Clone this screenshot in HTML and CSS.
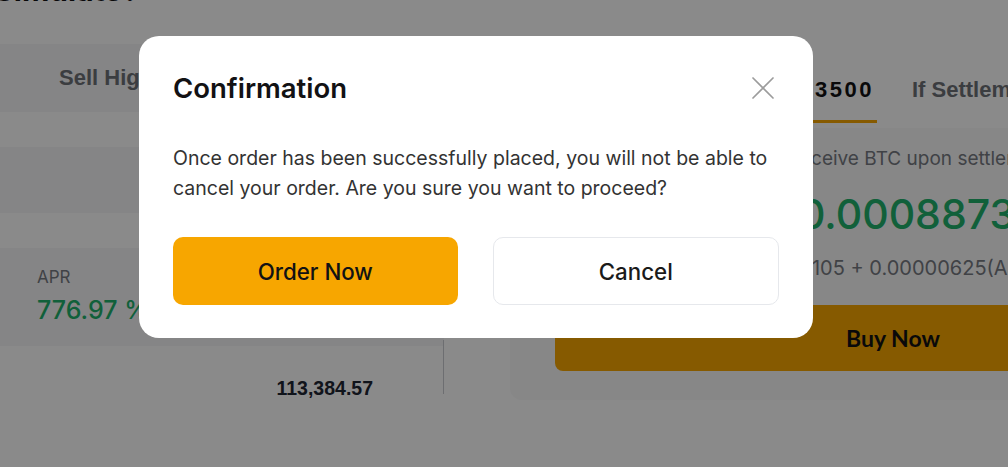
FILE: index.html
```html
<!DOCTYPE html>
<html lang="en">
<head>
<meta charset="utf-8">
<title>Confirmation</title>
<link rel="stylesheet" href="styles.css">
</head>
<body>
<div class="page">
  <h1 class="page-title">How to Simulate?</h1>
  <div class="content">
    <section class="left">
      <div class="band tabs-left"><span class="tab-left">Sell High</span></div>
      <div class="spacer"></div>
      <div class="band band-row"></div>
      <div class="spacer"></div>
      <div class="band apr-card">
        <div class="apr-label">APR</div>
        <div class="apr-value">776.97 %</div>
      </div>
      <div class="price-row"><span class="price">113,384.57</span></div>
    </section>
    <section class="right">
      <div class="tabs-right">
        <span class="tab tab-active">If Settlement Price ≤ 113500</span>
        <span class="tab">If Settlement Price &gt; 113500</span>
      </div>
      <div class="result-card">
        <p class="line receive">You will receive BTC upon settlement</p>
        <p class="line amount">0.00088730 BTC</p>
        <p class="line breakdown">0.00088105 + 0.00000625(APR Interest)</p>
        <button class="buy" type="button">Buy Now</button>
      </div>
    </section>
  </div>
</div>

<div class="backdrop"></div>

<div class="modal" role="dialog" aria-labelledby="modal-title">
  <div class="modal-header">
    <h2 class="modal-title" id="modal-title">Confirmation</h2>
    <button class="close" type="button" aria-label="Close">
      <svg width="24" height="24" viewBox="0 0 24 24" fill="none" stroke="currentColor" stroke-width="1.7" stroke-linecap="round">
        <path d="M2 2 L22 22 M22 2 L2 22"/>
      </svg>
    </button>
  </div>
  <p class="modal-text">Once order has been successfully placed, you will not be able to cancel your order. Are you sure you want to proceed?</p>
  <div class="modal-actions">
    <button class="btn btn-primary" type="button">Order Now</button>
    <button class="btn btn-secondary" type="button">Cancel</button>
  </div>
</div>
</body>
</html>
```

FILE: styles.css
```css
* { box-sizing: border-box; }

html, body {
  margin: 0;
  padding: 0;
}

body {
  width: 1008px;
  height: 467px;
  overflow: hidden;
  background: #ffffff;
  font-family: Inter, "Noto Sans", Arial, sans-serif;
  color: #121214;
}

.page {
  width: 1008px;
  height: 467px;
  overflow: hidden;
}

.page-title {
  margin: -28px 0 36px -115px;
  height: 36px;
  font-size: 30px;
  line-height: 36px;
  font-weight: 700;
  white-space: nowrap;
}

.content {
  display: flex;
}

.left {
  width: 444px;
  flex: none;
  display: flex;
  flex-direction: column;
}

.band {
  background: #f6f6f7;
}

.tabs-left {
  height: 68px;
  display: flex;
  align-items: center;
  padding-left: 59px;
}

.tab-left {
  font-family: "Liberation Sans", Arial, sans-serif;
  font-size: 22px;
  font-weight: 700;
  color: #6e7177;
}

.spacer { height: 35px; }

.band-row { height: 66px; }

.apr-card {
  height: 98px;
  padding: 19px 0 0 37px;
}

.apr-label {
  font-size: 17px;
  line-height: 20px;
  color: #777b82;
}

.apr-value {
  margin-top: 8px;
  font-size: 25px;
  line-height: 30px;
  font-weight: 500;
  color: #20b26c;
}

.price-row {
  height: 54px;
  margin-top: -6px;
  padding: 38px 70px 0 0;
  border-right: 1px solid #c9ccd1;
  text-align: right;
}

.price {
  font-family: "Liberation Sans", Arial, sans-serif;
  font-size: 19.5px;
  line-height: 20px;
  font-weight: 700;
  color: #1e2533;
}

.right {
  flex: none;
  width: 900px;
  display: flex;
  flex-direction: column;
}

.tabs-right {
  margin-top: 12px;
  display: flex;
  gap: 30px;
}

.tab {
  padding: 19px 5px 15px;
  font-family: "Liberation Sans", Arial, sans-serif;
  font-size: 22px;
  line-height: 30px;
  font-weight: 700;
  color: #6e7177;
  white-space: nowrap;
  border-bottom: 3px solid transparent;
}

.tab-active {
  width: 433px;
  padding-right: 3px;
  text-align: right;
  letter-spacing: 2.5px;
  color: #121214;
  border-bottom-color: #f7a600;
}

.result-card {
  margin: 5px 0 0 66px;
  width: 800px;
  height: 272px;
  padding: 17px 0 0 45px;
  background: #f9f9fa;
  border-radius: 12px;
}

.line {
  margin: 0;
  white-space: nowrap;
}

.receive {
  padding-left: 164px;
  font-size: 19px;
  line-height: 28px;
  color: #777b82;
}

.amount {
  margin-top: 15px;
  padding-left: 244px;
  font-size: 41px;
  line-height: 52px;
  font-weight: 500;
  color: #20b26c;
}

.breakdown {
  margin-top: 15px;
  padding-left: 177px;
  font-size: 20px;
  line-height: 26px;
  color: #777b82;
}

.buy {
  display: block;
  margin-top: 24px;
  width: 676px;
  height: 66px;
  border: 0;
  border-radius: 8px;
  background: #f7a600;
  font-family: Lato, Inter, sans-serif;
  font-size: 23px;
  font-weight: 700;
  color: #121214;
}

.backdrop {
  position: fixed;
  inset: 0;
  background: rgba(0, 0, 0, 0.46);
}

.modal {
  position: fixed;
  left: 139px;
  top: 36px;
  width: 674px;
  padding: 34px 34px 33px;
  background: #ffffff;
  border-radius: 20px;
}

.modal-header {
  display: flex;
  align-items: center;
  justify-content: space-between;
  height: 36px;
}

.modal-title {
  margin: 0;
  font-size: 27.5px;
  line-height: 36px;
  font-weight: 600;
  color: #121214;
}

.close {
  display: flex;
  padding: 0;
  margin-right: 4px;
  border: 0;
  background: none;
  color: #9c9c9c;
}

.modal-text {
  margin: 37px 0 0;
  font-size: 19.5px;
  line-height: 30px;
  color: #333333;
}

.modal-actions {
  display: flex;
  gap: 35px;
  margin-top: 34px;
}

.btn {
  flex: 1;
  height: 68px;
  border-radius: 10px;
  font-family: Inter, "Noto Sans", Arial, sans-serif;
  font-size: 22.3px;
  font-weight: 500;
  color: #121214;
}

.btn-primary {
  border: 0;
  background: #f7a600;
}

.btn-secondary {
  border: 1px solid #e6e8ec;
  background: #ffffff;
  color: #1a1a1a;
}
```
